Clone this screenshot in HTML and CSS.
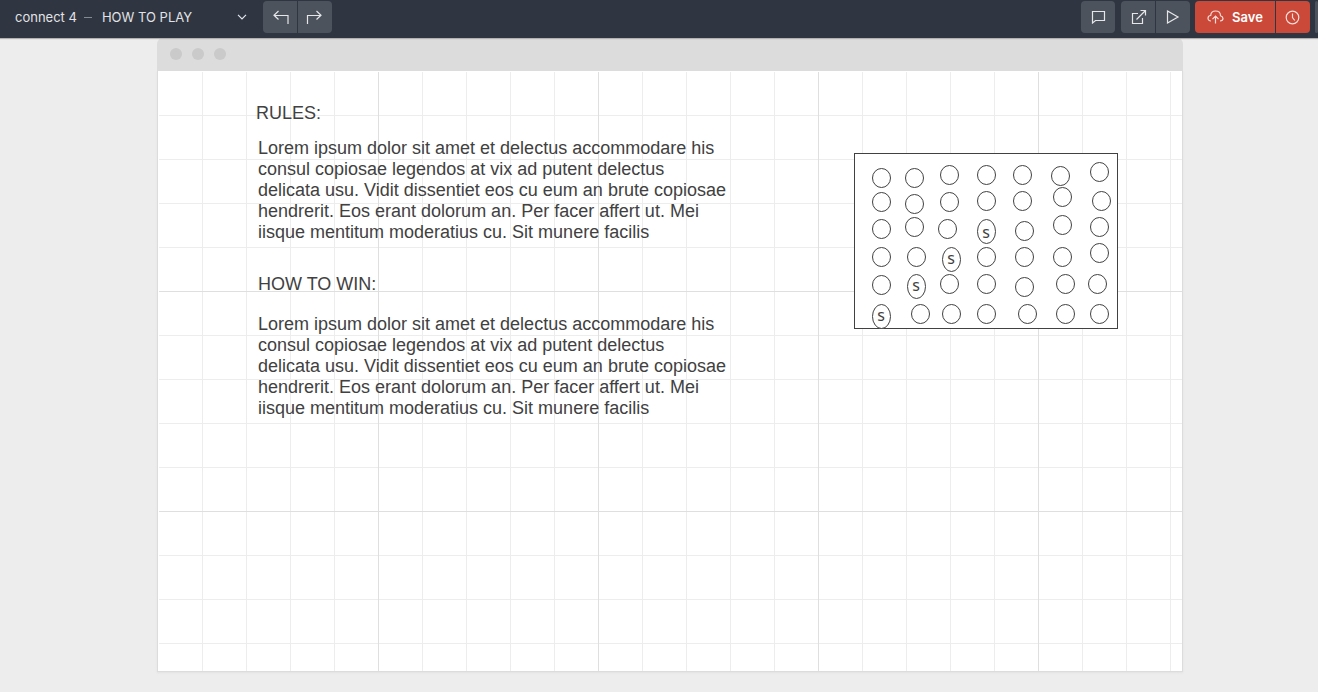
FILE: index.html
```html
<!DOCTYPE html>
<html lang="en">
<head>
<meta charset="utf-8">
<title>connect 4 - HOW TO PLAY</title>
<link rel="stylesheet" href="styles.css">
</head>
<body>
<header class="toolbar">
  <button class="page-picker" type="button">
    <span>connect 4</span>
    <span class="dash"></span>
    <span class="page-name">HOW TO PLAY</span>
    <svg class="chevron" width="10" height="6" viewBox="0 0 10 6"><path d="M1 .8l4 4 4-4"/></svg>
  </button>
  <div class="group">
    <button class="tool" type="button" aria-label="Undo"><svg width="18" height="14" viewBox="0 0 18 14"><path d="M7.500 1L3 5.200l4.500 4.300M3 5.500H17V14"/></svg></button>
    <button class="tool" type="button" aria-label="Redo"><svg width="18" height="14" viewBox="0 0 18 14"><path d="M10.500 1L15 5.200l-4.500 4.300M15 5.500H1.500V14"/></svg></button>
  </div>
  <div class="actions">
    <div class="group comment">
      <button class="tool" type="button" aria-label="Comments"><svg width="16" height="14" viewBox="0 0 16 14"><path d="M2.500 1.500h12v9H5.500l-3 2.500z"/></svg></button>
    </div>
    <div class="group">
      <button class="tool" type="button" aria-label="Share"><svg width="18" height="16" viewBox="0 0 18 16"><path d="M9 4.500H3.500v10h10V9M7.500 10.500l9-9M11.500 1.500h5v5"/></svg></button>
      <button class="tool" type="button" aria-label="Preview"><svg width="14" height="14" viewBox="0 0 14 14"><path d="M1.500 1v12l10.500-6z"/></svg></button>
    </div>
    <div class="group save">
      <button class="tool save-button" type="button"><svg width="17" height="16" viewBox="0 0 17 16"><path d="M4 12C2 12 1 10.800 1 9.200 1 7.500 2.200 6.500 3.700 6.500 3.900 3.500 5.800 2 8.500 2c3 0 5 2 5 4.700C15 7.200 16 8.200 16 9.600c0 1.500-1.200 2.400-3 2.400M8.500 14.500V7.500M5.500 10.200l3-3 3 3"/></svg>Save</button>
      <button class="tool" type="button" aria-label="History"><svg width="16" height="16" viewBox="0 0 16 16"><circle cx="7.500" cy="8.500" r="6.300"/><path d="M7.500 4.500v4l2.300 3"/></svg></button>
    </div>
    <div class="group more">
      <button class="tool" type="button" aria-label="More"></button>
    </div>
  </div>
</header>
<main class="workspace">
  <section class="frame">
    <div class="titlebar"><i class="dot"></i><i class="dot"></i><i class="dot"></i></div>
    <div class="canvas">
      <article class="copy">
        <h2 class="rules">RULES:</h2>
        <p>Lorem ipsum dolor sit amet et delectus accommodare his<br>consul copiosae legendos at vix ad putent delectus<br>delicata usu. Vidit dissentiet eos cu eum an brute copiosae<br>hendrerit. Eos erant dolorum an. Per facer affert ut. Mei<br>iisque mentitum moderatius cu. Sit munere facilis</p>
        <h2 class="win">HOW TO WIN:</h2>
        <p>Lorem ipsum dolor sit amet et delectus accommodare his<br>consul copiosae legendos at vix ad putent delectus<br>delicata usu. Vidit dissentiet eos cu eum an brute copiosae<br>hendrerit. Eos erant dolorum an. Per facer affert ut. Mei<br>iisque mentitum moderatius cu. Sit munere facilis</p>
      </article>
      <svg class="board" width="264" height="176" viewBox="0 0 264 176">
        <defs>
          <ellipse id="slot" cx=".5" cy="0" rx="9" ry="9.500"/>
          <ellipse id="disc" cx=".5" cy=".5" rx="9" ry="12"/>
        </defs>
        <rect class="edge" x=".5" y=".5" width="263" height="175"/>
        <g>
          <use href="#slot" x="27" y="25"/><use href="#slot" x="27" y="49"/><use href="#slot" x="27" y="76"/><use href="#slot" x="27" y="104"/><use href="#slot" x="27" y="132"/>
          <use href="#slot" x="60" y="25"/><use href="#slot" x="60" y="51"/><use href="#slot" x="60" y="74"/><use href="#slot" x="62" y="104"/><use href="#slot" x="66" y="161"/>
          <use href="#slot" x="95" y="22"/><use href="#slot" x="95" y="49"/><use href="#slot" x="93" y="76"/><use href="#slot" x="95" y="131"/><use href="#slot" x="97" y="161"/>
          <use href="#slot" x="132" y="22"/><use href="#slot" x="132" y="48"/><use href="#slot" x="132" y="104"/><use href="#slot" x="132" y="131"/><use href="#slot" x="132" y="161"/>
          <use href="#slot" x="168" y="22"/><use href="#slot" x="168" y="48"/><use href="#slot" x="170" y="78"/><use href="#slot" x="170" y="104"/><use href="#slot" x="170" y="134"/><use href="#slot" x="173" y="161"/>
          <use href="#slot" x="206" y="23"/><use href="#slot" x="208" y="44"/><use href="#slot" x="208" y="72"/><use href="#slot" x="208" y="104"/><use href="#slot" x="211" y="131"/><use href="#slot" x="211" y="161"/>
          <use href="#slot" x="245" y="19"/><use href="#slot" x="247" y="48"/><use href="#slot" x="245" y="74"/><use href="#slot" x="245" y="100"/><use href="#slot" x="243" y="131"/><use href="#slot" x="245" y="161"/>
          <use href="#disc" x="27" y="163"/><use href="#disc" x="62" y="133"/><use href="#disc" x="97" y="106"/><use href="#disc" x="132" y="78"/>
        </g>
        <text x="27" y="168">s</text><text x="62" y="138">s</text><text x="97" y="111">s</text><text x="132" y="85">s</text>
      </svg>
    </div>
  </section>
</main>
</body>
</html>
```

FILE: styles.css
```css
* { box-sizing: border-box; }

body {
  margin: 0;
  min-height: 100vh;
  display: flex;
  flex-direction: column;
  background: #ededed;
  color: #414141;
  font-family: "Liberation Sans", Arial, sans-serif;
  overflow-x: hidden;
}

button {
  border: 0;
  padding: 0;
  font: inherit;
  color: inherit;
}

.toolbar {
  display: flex;
  height: 38px;
  padding-top: 1px;
  background: #2f3541;
  box-shadow: 0 1px 1px #b5b0b0;
  color: #e1e3e6;
  font: 13px/32px Inter, sans-serif;
  position: relative;
}

.page-picker {
  display: flex;
  align-items: center;
  width: 263px;
  height: 32px;
  padding: 0 16px 0 15px;
  background: none;
}

.dash {
  width: 8px;
  height: 1px;
  margin: 0 10px 0 7px;
  background: #858990;
}

.toolbar svg {
  fill: none;
  stroke: #e4e6e8;
  stroke-width: 1.2;
}

.chevron { margin-left: auto; }

.group {
  display: flex;
  flex: none;
  gap: 1px;
  height: 32px;
  border-radius: 4px;
  overflow: hidden;
}

.tool {
  display: flex;
  align-items: center;
  justify-content: center;
  width: 34px;
  height: 32px;
  background: #4d535d;
}

.actions {
  display: flex;
  margin-left: auto;
}

.comment { margin-right: 6px; }

.save { margin: 0 5px; }

.save .tool { background: #cb4939; color: #fff; }

.save .save-button {
  width: 80px;
  gap: 8px;
  font-weight: 600;
}

.save svg { stroke: #f7dcd8; }

.more { width: 3px; }

.workspace {
  flex: 1;
  display: flex;
  padding: 0 135px 20px 157px;
}

.frame {
  flex: 1;
  display: flex;
  flex-direction: column;
}

.titlebar {
  display: flex;
  gap: 10px;
  height: 33px;
  padding: 10px 13px;
  background: #dcdcdc;
  border-radius: 6px 6px 0 0;
}

.dot {
  width: 12px;
  height: 12px;
  border-radius: 50%;
  background: #cacaca;
}

.canvas {
  flex: 1;
  display: flex;
  justify-content: space-between;
  align-items: flex-start;
  gap: 24px;
  padding: 32px 64px 32px 98px;
  border: solid #dcdcdc;
  border-width: 0 1px 1px;
  background-color: #fff;
  background-image:
    linear-gradient(#fff, #fff),
    linear-gradient(#fff, #fff),
    linear-gradient(90deg, #dfdfdf 1px, transparent 1px),
    linear-gradient(#dfdfdf 1px, transparent 1px),
    linear-gradient(90deg, #ededed 1px, transparent 1px),
    linear-gradient(#ededed 1px, transparent 1px);
  background-size: 1px 100%, 100% 1px, 220px 220px, 220px 220px, 44px 44px, 44px 44px;
  background-repeat: no-repeat, no-repeat, repeat, repeat, repeat, repeat;
  box-shadow: 0 1px 2px #e2e2e2;
}

.copy {
  max-width: 490px;
  font-size: 18px;
  line-height: 21px;
}

.copy h2 {
  margin: 0;
  font-size: 18px;
  font-weight: 400;
}

.copy p { margin: 0 0 0 2px; }

.copy .rules { margin-bottom: 14px; }

.copy .win { margin: 31px 0 19px 2px; }

.board {
  flex: none;
  margin-top: 50px;
  fill: #fff;
  stroke: #414141;
}

.board text {
  fill: #414141;
  stroke: none;
  font: 16px "Noto Sans", sans-serif;
  text-anchor: middle;
}
```
